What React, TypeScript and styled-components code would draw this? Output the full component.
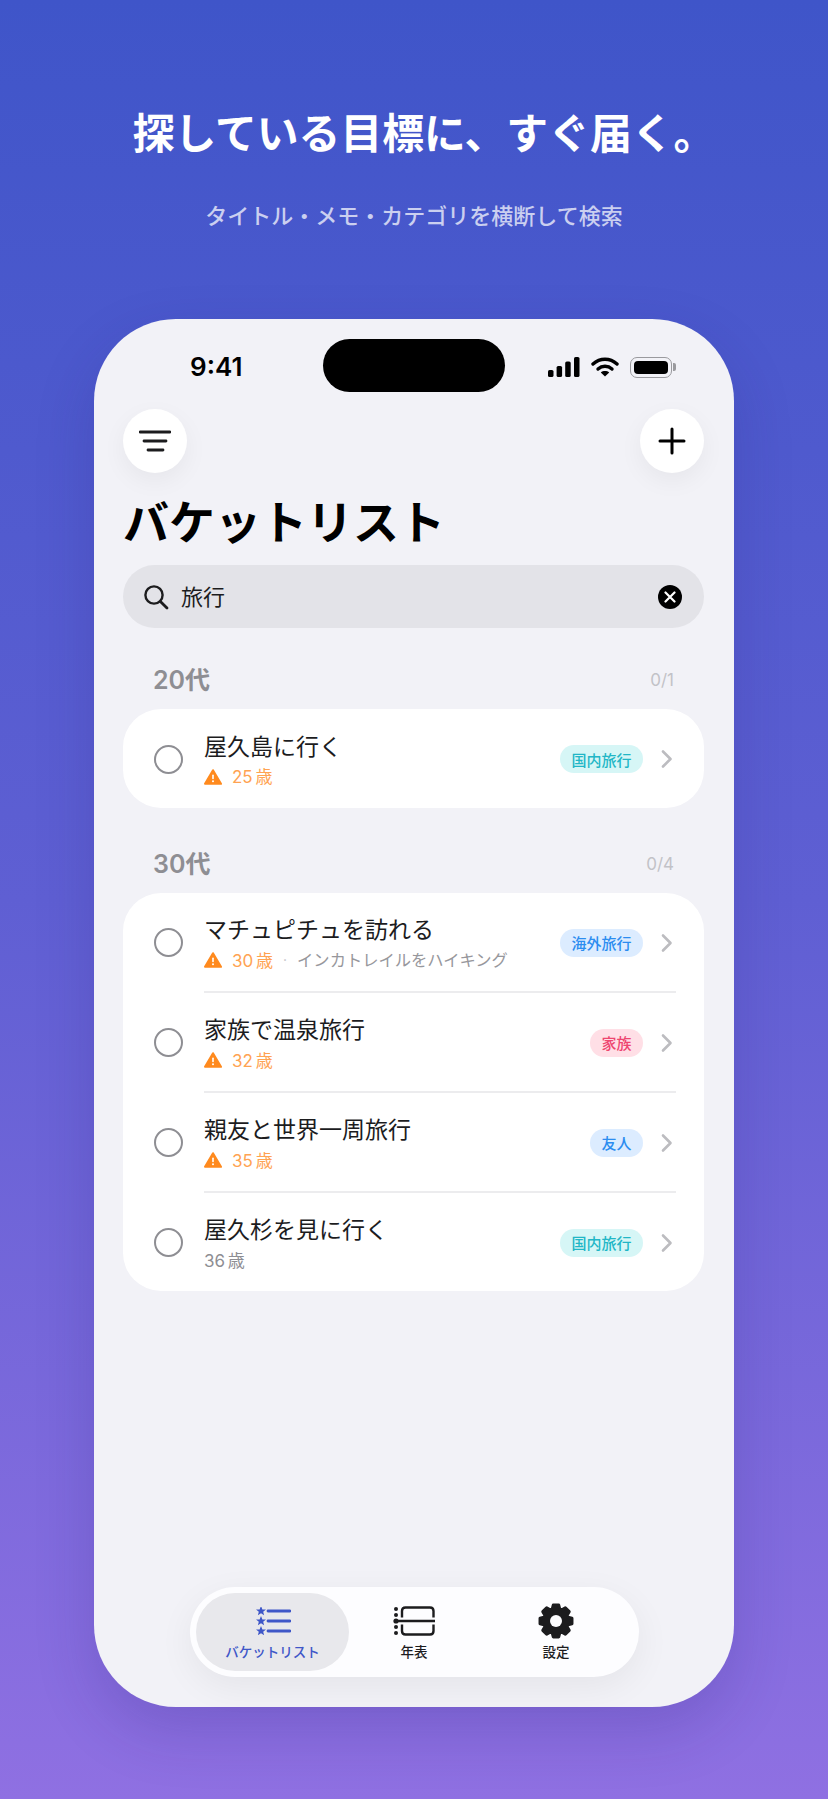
import React from "react";
import styled, { createGlobalStyle } from "styled-components";

const GlobalStyle = createGlobalStyle`
  html, body {
    margin: 0;
    padding: 0;
  }
  body {
    font-family: "Inter", "Noto Sans CJK JP", sans-serif;
    text-spacing-trim: space-all;
  }
`;

type Tone = "teal" | "blue" | "pink";

const toneStyles: Record<Tone, { bg: string; fg: string }> = {
  teal: { bg: "#d6f6f6", fg: "#22b6c6" },
  blue: { bg: "#dcecff", fg: "#2c8df0" },
  pink: { bg: "#ffdfe6", fg: "#ee4670" },
};

interface Goal {
  title: string;
  age: number;
  warn: boolean;
  memo?: string;
  tag: string;
  tone: Tone;
}

const twenties: Goal[] = [
  { title: "屋久島に行く", age: 25, warn: true, tag: "国内旅行", tone: "teal" },
];

const thirties: Goal[] = [
  { title: "マチュピチュを訪れる", age: 30, warn: true, memo: "インカトレイルをハイキング", tag: "海外旅行", tone: "blue" },
  { title: "家族で温泉旅行", age: 32, warn: true, tag: "家族", tone: "pink" },
  { title: "親友と世界一周旅行", age: 35, warn: true, tag: "友人", tone: "blue" },
  { title: "屋久杉を見に行く", age: 36, warn: false, tag: "国内旅行", tone: "teal" },
];

// 8 chunky teeth, same proportions as the tab icon in the shot
const gearPath = (() => {
  const pts: string[] = [];
  for (let i = 0; i < 8; i++) {
    const a = (i * Math.PI) / 4;
    const at = (r: number, d: number) => {
      const x = 18 + r * Math.cos(a + d);
      const y = 18 + r * Math.sin(a + d);
      return `${x.toFixed(2)} ${y.toFixed(2)}`;
    };
    pts.push(at(12.6, -0.3), at(16.2, -0.17), at(16.2, 0.17), at(12.6, 0.3));
  }
  return `M${pts.join(" L")} Z`;
})();

const WarnIcon = () => (
  <svg width="18" height="16" viewBox="0 0 18 16">
    <path d="M9 1.2 L17 14.8 H1 Z" fill="#ff8a1e" stroke="#ff8a1e" strokeWidth="2" strokeLinejoin="round" />
    <rect x="8.2" y="5.4" width="1.6" height="4.8" rx="0.8" fill="#fff" />
    <circle cx="9" cy="12.2" r="1" fill="#fff" />
  </svg>
);

const Row: React.FC<{ goal: Goal }> = ({ goal }) => (
  <RowWrap>
    <Radio />
    <RowBody>
      <RowTitle>{goal.title}</RowTitle>
      <RowSub>
        {goal.warn && <WarnIcon />}
        <Age $warn={goal.warn}>{goal.age} 歳</Age>
        {goal.memo && (
          <>
            <Dot>·</Dot>
            <Memo>{goal.memo}</Memo>
          </>
        )}
      </RowSub>
    </RowBody>
    <Badge $tone={goal.tone}>{goal.tag}</Badge>
    <svg width="14" height="20" viewBox="0 0 14 20">
      <path d="M3 2.5 L10.5 10 L3 17.5" fill="none" stroke="#bcbcc0" strokeWidth="2.6" strokeLinecap="round" strokeLinejoin="round" />
    </svg>
  </RowWrap>
);

const Section: React.FC<{ label: string; count: string; goals: Goal[] }> = ({ label, count, goals }) => (
  <SectionWrap>
    <SectionHead>
      <SectionLabel>{label}</SectionLabel>
      <SectionCount>{count}</SectionCount>
    </SectionHead>
    <Card>
      {goals.map((goal, i) => (
        <React.Fragment key={goal.title}>
          {i > 0 && <Divider />}
          <Row goal={goal} />
        </React.Fragment>
      ))}
    </Card>
  </SectionWrap>
);

const Star: React.FC<{ y: number }> = ({ y }) => (
  <path
    transform={`translate(6 ${y})`}
    d="M0 -5 L1.4 -1.6 L5 -1.5 L2.2 0.7 L3.1 4.2 L0 2.2 L-3.1 4.2 L-2.2 0.7 L-5 -1.5 L-1.4 -1.6 Z"
    fill="#3f57c8"
  />
);

const App: React.FC = () => {
  return (
    <>
      <GlobalStyle />
      <Page>
        <Hero>
          <Headline>探している目標に、すぐ届く。</Headline>
          <Subline>タイトル・メモ・カテゴリを横断して検索</Subline>
        </Hero>
        <Phone>
          <Island />
          <StatusBar>
            <Clock>9:41</Clock>
            <StatusIcons>
              <svg width="32" height="20" viewBox="0 0 32 20">
                <rect x="0" y="13" width="5.5" height="7" rx="1.6" fill="#000" />
                <rect x="8.6" y="9" width="5.5" height="11" rx="1.6" fill="#000" />
                <rect x="17.2" y="4.5" width="5.5" height="15.5" rx="1.6" fill="#000" />
                <rect x="26" y="0" width="5.5" height="20" rx="1.6" fill="#000" />
              </svg>
              <svg width="28" height="20" viewBox="0 0 28 20">
                <path d="M2 7 C9 0.6 19 0.6 26 7" fill="none" stroke="#000" strokeWidth="3.4" strokeLinecap="round" />
                <path d="M7 12 C11 8.4 17 8.4 21 12" fill="none" stroke="#000" strokeWidth="3.4" strokeLinecap="round" />
                <path d="M14 19.6 L9.8 15.4 C12 13.6 16 13.6 18.2 15.4 Z" fill="#000" />
              </svg>
              <Battery>
                <BatteryFill />
              </Battery>
            </StatusIcons>
          </StatusBar>

          <TopActions>
            <RoundButton>
              <svg width="32" height="24" viewBox="0 0 32 24">
                <path d="M1 3 H31 M5 12 H27 M9 21 H24" stroke="#1c1c1e" strokeWidth="2.8" strokeLinecap="round" />
              </svg>
            </RoundButton>
            <RoundButton>
              <svg width="28" height="28" viewBox="0 0 28 28">
                <path d="M14 2 V26 M2 14 H26" stroke="#000" strokeWidth="3" strokeLinecap="round" />
              </svg>
            </RoundButton>
          </TopActions>

          <Title>バケットリスト</Title>

          <SearchBar>
            <svg width="26" height="26" viewBox="0 0 26 26">
              <circle cx="11" cy="11" r="8.6" fill="none" stroke="#1c1c1e" strokeWidth="2.4" />
              <path d="M17.4 17.4 L24 24" stroke="#1c1c1e" strokeWidth="2.8" strokeLinecap="round" />
            </svg>
            <SearchText>旅行</SearchText>
            <ClearButton>
              <svg width="12" height="12" viewBox="0 0 12 12">
                <path d="M1.5 1.5 L10.5 10.5 M10.5 1.5 L1.5 10.5" stroke="#fff" strokeWidth="2.2" strokeLinecap="round" />
              </svg>
            </ClearButton>
          </SearchBar>

          <Section label="20代" count="0/1" goals={twenties} />
          <Section label="30代" count="0/4" goals={thirties} />

          <TabBar>
            <Tab $active>
              <TabIcon>
                <svg width="36" height="28" viewBox="0 0 36 28">
                  <Star y={4} />
                  <Star y={14} />
                  <Star y={24} />
                  <path d="M13 4 H35 M13 14 H35 M13 24 H35" stroke="#3f57c8" strokeWidth="2.8" strokeLinecap="round" />
                </svg>
              </TabIcon>
              <TabLabel $active>バケットリスト</TabLabel>
            </Tab>
            <Tab>
              <TabIcon>
                <svg width="42" height="30" viewBox="0 0 42 30">
                  <circle cx="3" cy="3" r="2" fill="#1c1c1e" />
                  <circle cx="3" cy="9" r="2" fill="#1c1c1e" />
                  <circle cx="3" cy="15" r="2.6" fill="#1c1c1e" />
                  <circle cx="3" cy="21" r="2" fill="#1c1c1e" />
                  <circle cx="3" cy="27" r="2" fill="#1c1c1e" />
                  <path d="M3 15 H42" stroke="#1c1c1e" strokeWidth="2.4" />
                  <path d="M9 11.5 V5 Q9 1.5 12.5 1.5 H37 Q40.5 1.5 40.5 5 V11.5" fill="none" stroke="#1c1c1e" strokeWidth="2.4" />
                  <path d="M9 18.5 V25 Q9 28.5 12.5 28.5 H37 Q40.5 28.5 40.5 25 V18.5" fill="none" stroke="#1c1c1e" strokeWidth="2.4" />
                </svg>
              </TabIcon>
              <TabLabel>年表</TabLabel>
            </Tab>
            <Tab>
              <TabIcon>
                <svg width="36" height="36" viewBox="0 0 36 36">
                  <path d={gearPath} fill="#1c1c1e" stroke="#1c1c1e" strokeWidth="3" strokeLinejoin="round" />
                  <circle cx="18" cy="18" r="6" fill="#fdfdff" />
                </svg>
              </TabIcon>
              <TabLabel>設定</TabLabel>
            </Tab>
          </TabBar>
        </Phone>
      </Page>
    </>
  );
};

const Page = styled.div`
  width: 828px;
  height: 1799px;
  overflow: hidden;
  display: flex;
  flex-direction: column;
  align-items: center;
  background: linear-gradient(180deg, #3f55c9 0%, #5f5fd3 50%, #8f70e2 100%);
`;

const Hero = styled.div`
  height: 319px;
  padding-top: 105px;
  box-sizing: border-box;
  display: flex;
  flex-direction: column;
  align-items: center;
`;

const Headline = styled.h1`
  margin: 0;
  padding-left: 20px;
  font-size: 41.8px;
  line-height: 58px;
  font-weight: 700;
  color: #fff;
`;

const Subline = styled.p`
  margin: 37px 0 0;
  font-size: 22px;
  line-height: 32px;
  font-weight: 500;
  color: rgba(255, 255, 255, 0.72);
`;

const Phone = styled.div`
  position: relative;
  width: 640px;
  height: 1388px;
  padding: 0 30px 0 29px;
  box-sizing: border-box;
  background: #f2f2f7;
  border-radius: 82px;
  box-shadow: 0 24px 60px rgba(40, 30, 120, 0.2);
`;

const Island = styled.div`
  position: absolute;
  top: 20px;
  left: 229px;
  width: 182px;
  height: 53px;
  background: #000;
  border-radius: 27px;
`;

const StatusBar = styled.div`
  height: 90px;
  padding: 34px 32px 0 67px;
  box-sizing: border-box;
  display: flex;
  justify-content: space-between;
  align-items: flex-start;
`;

const Clock = styled.span`
  font-size: 26px;
  line-height: 28px;
  font-weight: 600;
  color: #000;
`;

const StatusIcons = styled.div`
  display: flex;
  align-items: center;
  gap: 11px;
  height: 28px;
`;

const Battery = styled.div`
  position: relative;
  width: 42px;
  height: 21px;
  padding: 3px;
  box-sizing: border-box;
  border: 1.5px solid #9a9a9e;
  border-radius: 7px;
  &:after {
    content: " ";
    position: absolute;
    top: 5px;
    right: -5px;
    width: 3px;
    height: 8px;
    background: #9a9a9e;
    border-radius: 0 2px 2px 0;
  }
`;

const BatteryFill = styled.div`
  width: 100%;
  height: 100%;
  background: #000;
  border-radius: 4px;
`;

const TopActions = styled.div`
  display: flex;
  justify-content: space-between;
`;

const RoundButton = styled.div`
  width: 64px;
  height: 64px;
  border-radius: 50%;
  background: #fff;
  display: flex;
  align-items: center;
  justify-content: center;
  box-shadow: 0 8px 24px rgba(0, 0, 0, 0.05);
`;

const Title = styled.h2`
  margin: 17px 0 11px;
  font-size: 46px;
  line-height: 64px;
  font-weight: 700;
  color: #000;
`;

const SearchBar = styled.div`
  height: 63px;
  padding: 0 22px 0 20px;
  box-sizing: border-box;
  display: flex;
  align-items: center;
  gap: 12px;
  background: #e3e3e8;
  border-radius: 32px;
`;

const SearchText = styled.span`
  flex: 1;
  font-size: 22px;
  line-height: 30px;
  color: #1c1c1e;
`;

const ClearButton = styled.div`
  width: 24px;
  height: 24px;
  border-radius: 50%;
  background: #000;
  display: flex;
  align-items: center;
  justify-content: center;
`;

const SectionWrap = styled.section`
  margin-top: 35px;
  & + & {
    margin-top: 39px;
  }
`;

const SectionHead = styled.div`
  height: 34px;
  margin-bottom: 12px;
  padding: 0 30px 0 30px;
  display: flex;
  justify-content: space-between;
  align-items: center;
`;

const SectionLabel = styled.span`
  margin-bottom: 4px;
  font-size: 25px;
  font-weight: 600;
  color: #8e8e93;
`;

const SectionCount = styled.span`
  font-size: 17px;
  color: #c2c2c7;
`;

const Card = styled.div`
  background: #fff;
  border-radius: 38px;
`;

const Divider = styled.div`
  height: 1.5px;
  margin: 0 28px 0 81px;
  background: #ececee;
`;

const RowWrap = styled.div`
  height: 98.5px;
  padding: 2px 30px 0 31px;
  box-sizing: border-box;
  display: flex;
  align-items: center;
  gap: 17px;
`;

const Radio = styled.div`
  width: 29px;
  height: 29px;
  box-sizing: border-box;
  border: 2.6px solid #8e8e93;
  border-radius: 50%;
  margin-right: 4px;
  flex-shrink: 0;
`;

const RowBody = styled.div`
  flex: 1;
  min-width: 0;
  padding-top: 5px;
`;

const RowTitle = styled.div`
  font-size: 23px;
  line-height: 30px;
  color: #1c1c1e;
`;

const RowSub = styled.div`
  height: 30px;
  margin: -1px 0 1px;
  display: flex;
  align-items: center;
  gap: 10px;
  & > svg {
    margin-top: 2px;
  }
`;

const Age = styled.span<{ $warn: boolean }>`
  font-size: 17px;
  color: ${(p) => (p.$warn ? "#ffa352" : "#8e8e93")};
  word-spacing: -2px;
`;

const Dot = styled.span`
  font-size: 14px;
  color: #c2c2c7;
`;

const Memo = styled.span`
  font-size: 16.3px;
  color: #97979c;
`;

const Badge = styled.span<{ $tone: Tone }>`
  height: 28px;
  padding: 0 11.5px;
  display: flex;
  align-items: center;
  font-size: 15px;
  font-weight: 500;
  border-radius: 14px;
  background: ${(p) => toneStyles[p.$tone].bg};
  color: ${(p) => toneStyles[p.$tone].fg};
`;

const TabBar = styled.nav`
  position: absolute;
  left: 96px;
  bottom: 30px;
  width: 449px;
  height: 90px;
  padding: 6px;
  box-sizing: border-box;
  display: grid;
  grid-template-columns: 153px 130px 1fr;
  background: #fdfdff;
  border-radius: 45px;
  box-shadow: 0 10px 36px rgba(0, 0, 0, 0.06);
`;

const Tab = styled.div<{ $active?: boolean }>`
  padding-top: 8px;
  display: flex;
  flex-direction: column;
  align-items: center;
  background: ${(p) => (p.$active ? "#e8e8ec" : "transparent")};
  border-radius: 39px;
`;

const TabIcon = styled.div`
  height: 40px;
  display: flex;
  align-items: center;
  justify-content: center;
`;

const TabLabel = styled.span<{ $active?: boolean }>`
  font-size: 13.5px;
  line-height: 22px;
  font-weight: 500;
  color: ${(p) => (p.$active ? "#3f57c8" : "#1c1c1e")};
`;

export default App;
